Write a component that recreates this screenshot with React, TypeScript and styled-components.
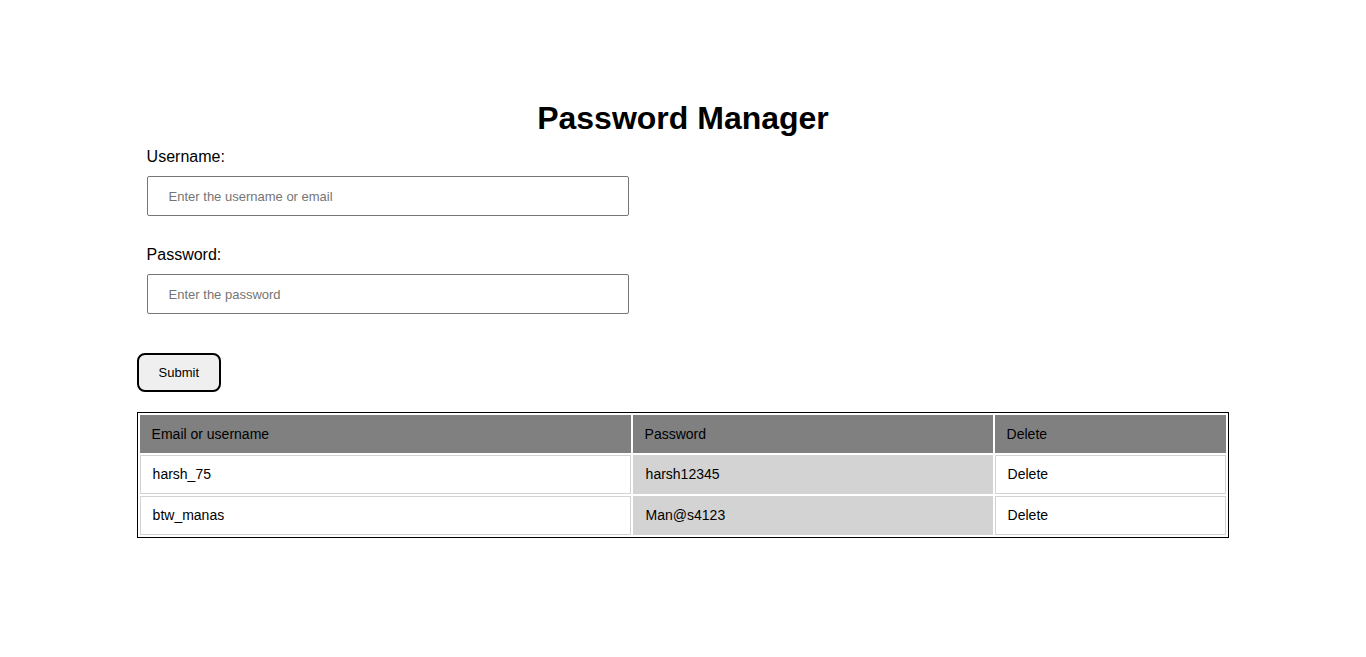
import React from "react";
import styled, { createGlobalStyle } from "styled-components";

const GlobalStyle = createGlobalStyle`
  html, body {
    margin: 0;
    padding: 0;
    background: #ffffff;
    color: #000000;
    font-family: "Liberation Sans", Arial, sans-serif;
  }
`;

const Page = styled.div`
  width: 80%;
  margin: 0 auto;
  padding-top: 100px;
  display: flex;
  flex-direction: column;
`;

const Title = styled.h1`
  margin: 0;
  font-size: 32px;
  font-weight: bold;
  text-align: center;
  line-height: normal;
`;

const Form = styled.form`
  display: flex;
  flex-direction: column;
  align-items: flex-start;
  margin-top: 11px;
`;

const Label = styled.label<{ $gap?: number }>`
  display: block;
  margin-left: 10px;
  margin-top: ${(p) => p.$gap ?? 0}px;
  font-size: 16px;
  line-height: normal;
`;

const Input = styled.input`
  box-sizing: border-box;
  width: 482px;
  height: 40px;
  margin: 10px 0 0 10px;
  padding: 0 0 0 21px;
  border: 1px solid #767676;
  border-radius: 2px;
  font-family: "Liberation Sans", Arial, sans-serif;
  font-size: 13px;
  color: #000;
  background: #fff;
  outline: none;
  &::placeholder {
    color: #757575;
  }
`;

const SubmitButton = styled.button`
  margin-top: 39px;
  padding: 10px 20px;
  border: 2px solid #000;
  border-radius: 8px;
  background: #efefef;
  font-family: "Liberation Sans", Arial, sans-serif;
  font-size: 13px;
  line-height: 15px;
  color: #000;
  cursor: pointer;
`;

const Table = styled.table`
  margin-top: 20px;
  width: 100%;
  table-layout: fixed;
  border: 1px solid #000;
  border-spacing: 2px;
  font-size: 14px;
`;

const Col = styled.col<{ $w?: number }>`
  width: ${(p) => (p.$w ? `${p.$w}px` : "auto")};
`;

const HeadCell = styled.th`
  background: #808080;
  border: 1px solid #808080;
  padding: 10px 11px;
  text-align: left;
  font-weight: normal;
  line-height: 16px;
`;

const Cell = styled.td<{ $shaded?: boolean }>`
  background: ${(p) => (p.$shaded ? "#d3d3d3" : "#ffffff")};
  border: 1px solid #d3d3d3;
  padding: 10px 12px;
  line-height: 17px;
`;

const rows = [
  { user: "harsh_75", pass: "harsh12345" },
  { user: "btw_manas", pass: "Man@s4123" },
];

export default function App() {
  return (
    <>
      <GlobalStyle />
      <Page>
        <Title>Password Manager</Title>
        <Form onSubmit={(e) => e.preventDefault()}>
          <Label htmlFor="username">Username:</Label>
          <Input id="username" type="text" placeholder="Enter the username or email" />
          <Label htmlFor="password" $gap={30}>Password:</Label>
          <Input id="password" type="text" placeholder="Enter the password" />
          <SubmitButton type="submit">Submit</SubmitButton>
        </Form>
        <Table>
          <colgroup>
            <Col $w={491} />
            <Col $w={360} />
            <Col />
          </colgroup>
          <thead>
            <tr>
              <HeadCell>Email or username</HeadCell>
              <HeadCell>Password</HeadCell>
              <HeadCell>Delete</HeadCell>
            </tr>
          </thead>
          <tbody>
            {rows.map((r) => (
              <tr key={r.user}>
                <Cell>{r.user}</Cell>
                <Cell $shaded>{r.pass}</Cell>
                <Cell>Delete</Cell>
              </tr>
            ))}
          </tbody>
        </Table>
      </Page>
    </>
  );
}
